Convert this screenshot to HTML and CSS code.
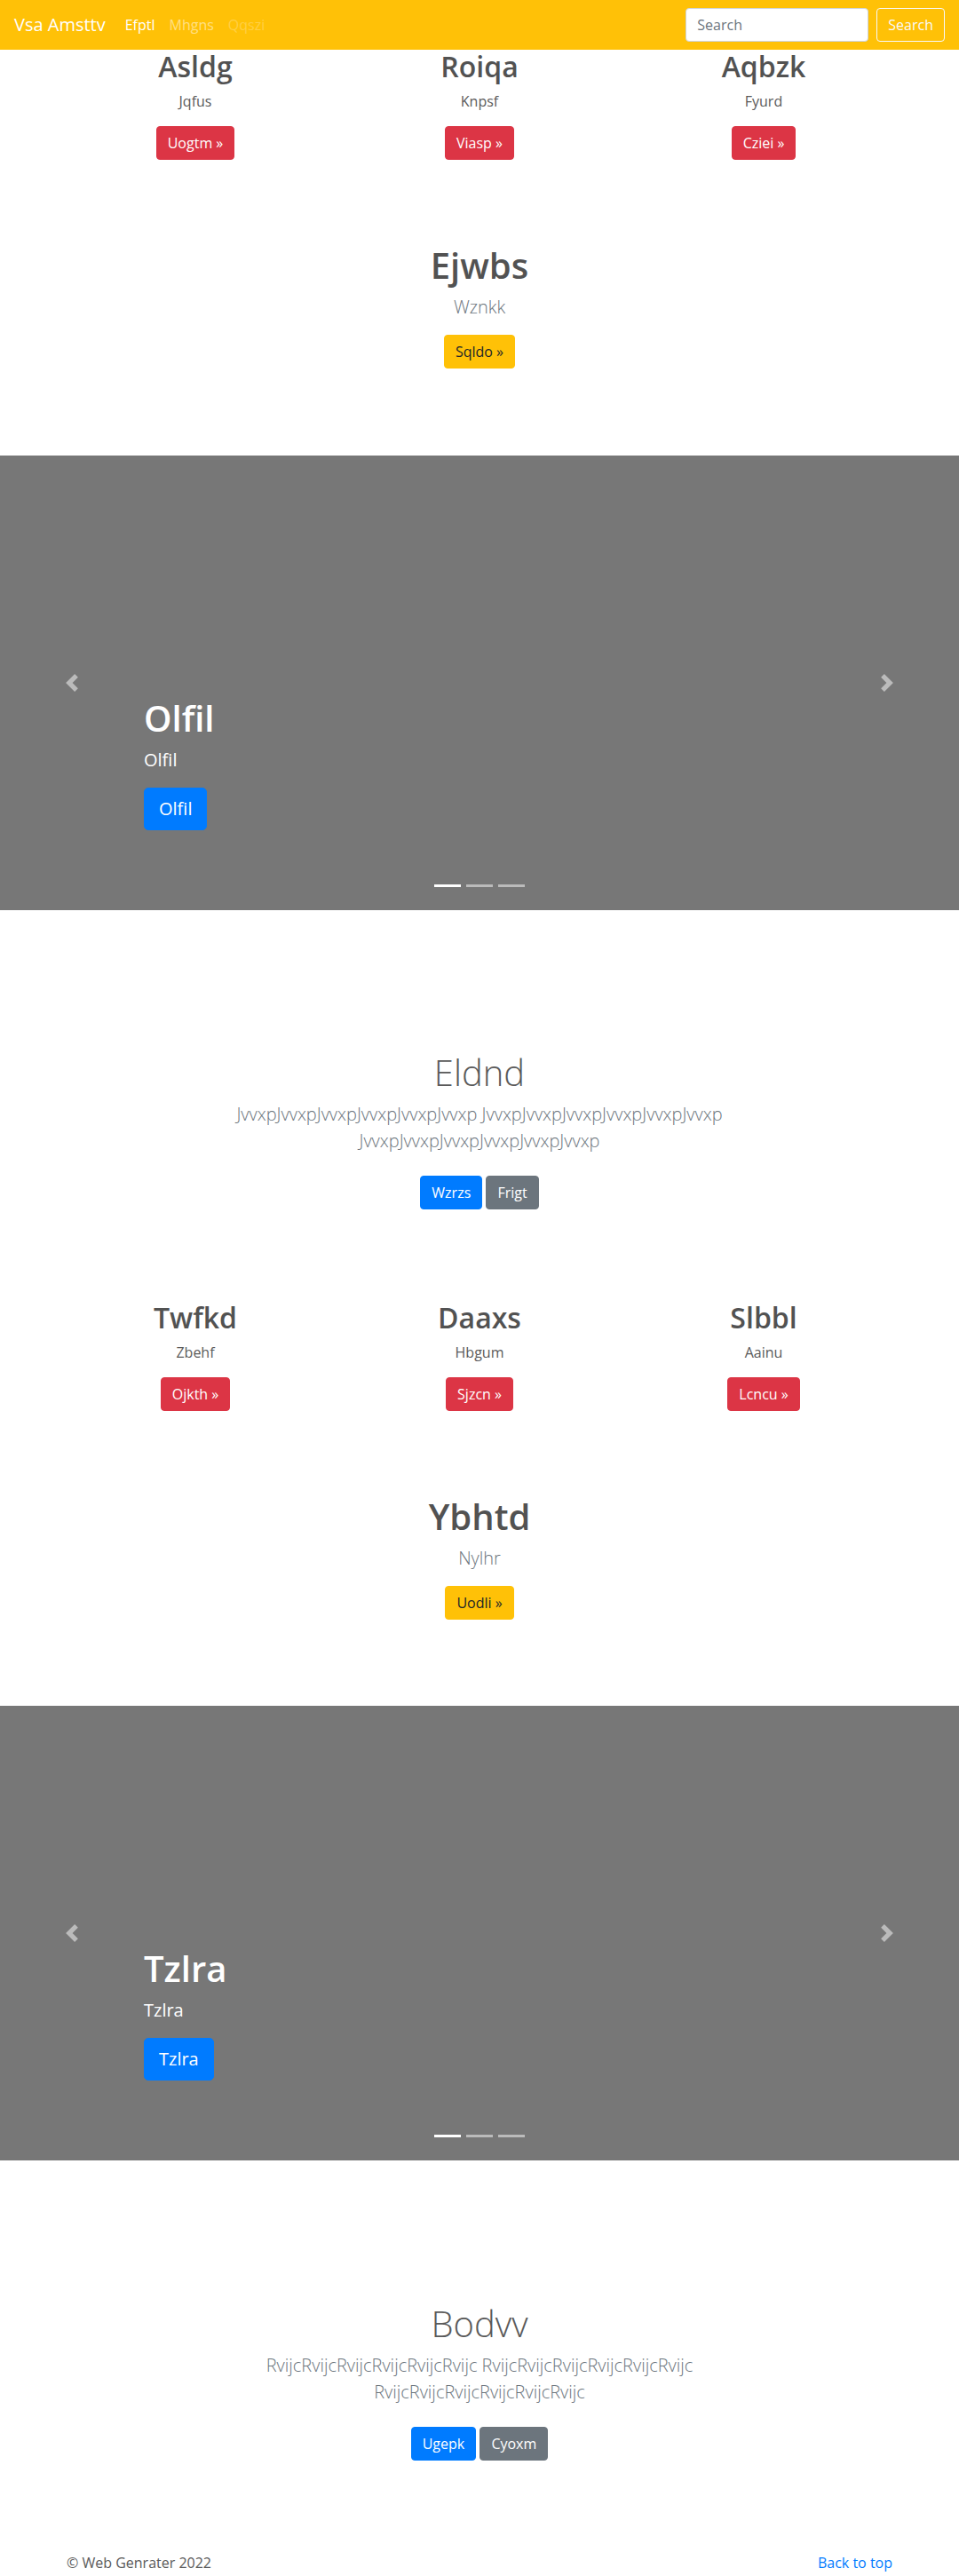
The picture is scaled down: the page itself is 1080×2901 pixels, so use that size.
FILE: index.html
```html
<!DOCTYPE html>
<html lang="en">
<head>
<meta charset="utf-8">
<title>Vsa Amsttv</title>
<link rel="stylesheet" href="styles.css">
</head>
<body>
<nav class="navbar">
  <a class="brand" href="#">Vsa Amsttv</a>
  <ul class="nav-links">
    <li><a class="nav-link active" href="#">Efptl</a></li>
    <li><a class="nav-link" href="#">Mhgns</a></li>
    <li><a class="nav-link disabled" href="#">Qqszi</a></li>
  </ul>
  <form class="search">
    <input class="search-input" type="text" placeholder="Search">
    <button class="btn btn-outline-light" type="button">Search</button>
  </form>
</nav>

<main>
  <section class="container feature-row">
    <div class="col">
      <h2 class="col-title">Asldg</h2>
      <p class="col-text">Jqfus</p>
      <div class="btn-line"><a class="btn btn-danger" href="#">Uogtm &raquo;</a></div>
    </div>
    <div class="col">
      <h2 class="col-title">Roiqa</h2>
      <p class="col-text">Knpsf</p>
      <div class="btn-line"><a class="btn btn-danger" href="#">Viasp &raquo;</a></div>
    </div>
    <div class="col">
      <h2 class="col-title">Aqbzk</h2>
      <p class="col-text">Fyurd</p>
      <div class="btn-line"><a class="btn btn-danger" href="#">Cziei &raquo;</a></div>
    </div>
  </section>

  <section class="feature-single">
    <h1 class="single-title">Ejwbs</h1>
    <p class="lead muted">Wznkk</p>
    <div class="btn-line"><a class="btn btn-warning" href="#">Sqldo &raquo;</a></div>
  </section>

  <section class="carousel">
    <ol class="indicators">
      <li class="active"></li>
      <li></li>
      <li></li>
    </ol>
    <a class="control control-prev" href="#" aria-label="Previous">
      <svg class="control-icon" viewBox="0 0 8 8" width="20" height="20"><path fill="#fff" d="M5.25 0l-4 4 4 4 1.5-1.5L4.25 4l2.5-2.5L5.25 0z"/></svg>
    </a>
    <a class="control control-next" href="#" aria-label="Next">
      <svg class="control-icon" viewBox="0 0 8 8" width="20" height="20"><path fill="#fff" d="M2.75 0l-1.5 1.5L3.75 4l-2.5 2.5L2.75 8l4-4-4-4z"/></svg>
    </a>
    <div class="caption">
      <h1 class="caption-title">Olfil</h1>
      <p class="caption-text">Olfil</p>
      <div class="caption-btn"><a class="btn btn-lg btn-primary" href="#">Olfil</a></div>
    </div>
  </section>

  <section class="jumbo">
    <div class="jumbo-inner">
      <h1 class="jumbo-title">Eldnd</h1>
      <p class="lead muted">JvvxpJvvxpJvvxpJvvxpJvvxpJvvxp JvvxpJvvxpJvvxpJvvxpJvvxpJvvxp JvvxpJvvxpJvvxpJvvxpJvvxpJvvxp</p>
      <div class="jumbo-btns"><a class="btn btn-primary" href="#">Wzrzs</a> <a class="btn btn-secondary" href="#">Frigt</a></div>
    </div>
  </section>

  <section class="container feature-row">
    <div class="col">
      <h2 class="col-title">Twfkd</h2>
      <p class="col-text">Zbehf</p>
      <div class="btn-line"><a class="btn btn-danger" href="#">Ojkth &raquo;</a></div>
    </div>
    <div class="col">
      <h2 class="col-title">Daaxs</h2>
      <p class="col-text">Hbgum</p>
      <div class="btn-line"><a class="btn btn-danger" href="#">Sjzcn &raquo;</a></div>
    </div>
    <div class="col">
      <h2 class="col-title">Slbbl</h2>
      <p class="col-text">Aainu</p>
      <div class="btn-line"><a class="btn btn-danger" href="#">Lcncu &raquo;</a></div>
    </div>
  </section>

  <section class="feature-single">
    <h1 class="single-title">Ybhtd</h1>
    <p class="lead muted">Nylhr</p>
    <div class="btn-line"><a class="btn btn-warning" href="#">Uodli &raquo;</a></div>
  </section>

  <section class="carousel">
    <ol class="indicators">
      <li class="active"></li>
      <li></li>
      <li></li>
    </ol>
    <a class="control control-prev" href="#" aria-label="Previous">
      <svg class="control-icon" viewBox="0 0 8 8" width="20" height="20"><path fill="#fff" d="M5.25 0l-4 4 4 4 1.5-1.5L4.25 4l2.5-2.5L5.25 0z"/></svg>
    </a>
    <a class="control control-next" href="#" aria-label="Next">
      <svg class="control-icon" viewBox="0 0 8 8" width="20" height="20"><path fill="#fff" d="M2.75 0l-1.5 1.5L3.75 4l-2.5 2.5L2.75 8l4-4-4-4z"/></svg>
    </a>
    <div class="caption">
      <h1 class="caption-title">Tzlra</h1>
      <p class="caption-text">Tzlra</p>
      <div class="caption-btn"><a class="btn btn-lg btn-primary" href="#">Tzlra</a></div>
    </div>
  </section>

  <section class="jumbo">
    <div class="jumbo-inner">
      <h1 class="jumbo-title">Bodvv</h1>
      <p class="lead muted">RvijcRvijcRvijcRvijcRvijcRvijc RvijcRvijcRvijcRvijcRvijcRvijc RvijcRvijcRvijcRvijcRvijcRvijc</p>
      <div class="jumbo-btns"><a class="btn btn-primary" href="#">Ugepk</a> <a class="btn btn-secondary" href="#">Cyoxm</a></div>
    </div>
  </section>
</main>

<footer class="container footer">
  <p class="footer-copy">&copy; Web Genrater 2022</p>
  <p class="footer-top"><a href="#">Back to top</a></p>
</footer>
</body>
</html>
```

FILE: styles.css
```css
* {
  box-sizing: border-box;
}

html,
body {
  margin: 0;
}

body {
  font-family: "Open Sans", "Noto Sans", "Liberation Sans", sans-serif;
  font-size: 16px;
  line-height: 1.5;
  color: #5a5a5a;
  background: #fff;
  padding-bottom: 48px;
}

a {
  text-decoration: none;
}

h1,
h2,
p {
  margin: 0;
}

/* ---------- navbar ---------- */
.navbar {
  height: 56px;
  background: #ffc107;
  display: flex;
  align-items: center;
  padding: 0 16px;
}

.brand {
  font-size: 20px;
  line-height: 30px;
  color: #fff;
  margin-right: 14px;
}

.nav-links {
  display: flex;
  list-style: none;
  margin: 0;
  padding: 0;
  flex: 1;
}

.nav-link {
  display: block;
  padding: 8px;
  color: rgba(255, 255, 255, 0.5);
}

.nav-link.active {
  color: #fff;
}

.nav-link.disabled {
  color: rgba(255, 255, 255, 0.25);
}

.search {
  display: flex;
  align-items: center;
  margin: 0;
}

.search-input {
  width: 206px;
  height: 38px;
  padding: 6px 12px;
  font-family: inherit;
  font-size: 16px;
  color: #495057;
  background: #fff;
  border: 1px solid #ced4da;
  border-radius: 4px;
  margin-right: 9px;
}

.search-input::placeholder {
  color: #6c757d;
}

/* ---------- buttons ---------- */
.btn {
  display: inline-block;
  font-family: inherit;
  font-size: 16px;
  line-height: 24px;
  font-weight: 400;
  padding: 6px 12px;
  border: 1px solid transparent;
  border-radius: 4px;
  text-align: center;
  vertical-align: middle;
}

.btn-lg {
  font-size: 20px;
  line-height: 30px;
  padding: 8px 16px;
  border-radius: 5px;
}

.btn-outline-light {
  color: #f8f9fa;
  border-color: #f8f9fa;
  background: transparent;
}

.btn-danger {
  color: #fff;
  background: #dc3545;
  border-color: #dc3545;
}

.btn-warning {
  color: #212529;
  background: #ffc107;
  border-color: #ffc107;
}

.btn-primary {
  color: #fff;
  background: #007bff;
  border-color: #007bff;
}

.btn-secondary {
  color: #fff;
  background: #6c757d;
  border-color: #6c757d;
}

.btn-line {
  line-height: 24px;
}

/* ---------- feature rows ---------- */
.container {
  width: 960px;
  margin: 0 auto;
}

.feature-row {
  display: grid;
  grid-template-columns: repeat(3, 1fr);
}

.col {
  padding: 0 15px;
  text-align: center;
}

.col-title {
  font-size: 32px;
  line-height: 38.4px;
  font-weight: 600;
  color: #525252;
  margin-bottom: 8px;
}

.col-text {
  margin-bottom: 16px;
}

.feature-single {
  text-align: center;
  padding: 94.5px 15px 97.6px;
}

.single-title {
  font-size: 40px;
  line-height: 48px;
  font-weight: 600;
  color: #525252;
  margin-bottom: 8px;
}

.lead {
  font-size: 20px;
  line-height: 30px;
  font-weight: 300;
  margin-bottom: 16px;
}

.muted {
  color: #6c757d;
}

/* ---------- carousel ---------- */
.carousel {
  position: relative;
  height: 512px;
  background: #777;
  display: flex;
  flex-direction: column;
  justify-content: flex-end;
}

.caption {
  margin: 0 15% 54px;
  padding: 20px 0;
  color: #fff;
}

.caption-title {
  font-size: 40px;
  line-height: 48px;
  font-weight: 600;
  margin-bottom: 8px;
}

.caption-text {
  font-size: 20px;
  line-height: 30px;
  margin-bottom: 16px;
}

.caption-btn {
  margin-bottom: 16px;
}

.control {
  position: absolute;
  top: 0;
  bottom: 0;
  width: 15%;
  display: flex;
  align-items: center;
  justify-content: center;
  opacity: 0.5;
}

.control-prev {
  left: 0;
}

.control-next {
  right: 0;
}

.control-icon {
  display: block;
  width: 20px;
  height: 20px;
}

.indicators {
  position: absolute;
  left: 0;
  right: 0;
  bottom: 0;
  display: flex;
  justify-content: center;
  list-style: none;
  padding: 0;
  margin: 0 15% 16px;
  z-index: 2;
}

.indicators li {
  box-sizing: content-box;
  width: 30px;
  height: 3px;
  margin: 0 3px;
  background: #fff;
  background-clip: padding-box;
  border-top: 10px solid transparent;
  border-bottom: 10px solid transparent;
  opacity: 0.5;
}

.indicators li.active {
  opacity: 1;
}

/* ---------- jumbotron ---------- */
.jumbo {
  padding: 159.4px 0 95px;
}

.jumbo-inner {
  max-width: 640px;
  margin: 0 auto;
  padding: 0 15px;
  text-align: center;
}

.jumbo-title {
  font-size: 40px;
  line-height: 48px;
  font-weight: 300;
  margin-bottom: 8px;
}

.jumbo-btns .btn {
  margin: 8px 0;
}

/* ---------- footer ---------- */
.footer {
  display: flex;
  justify-content: space-between;
  padding: 0 15px;
}

.footer p {
  margin-bottom: 16px;
}

.footer-top a {
  color: #007bff;
}
```
